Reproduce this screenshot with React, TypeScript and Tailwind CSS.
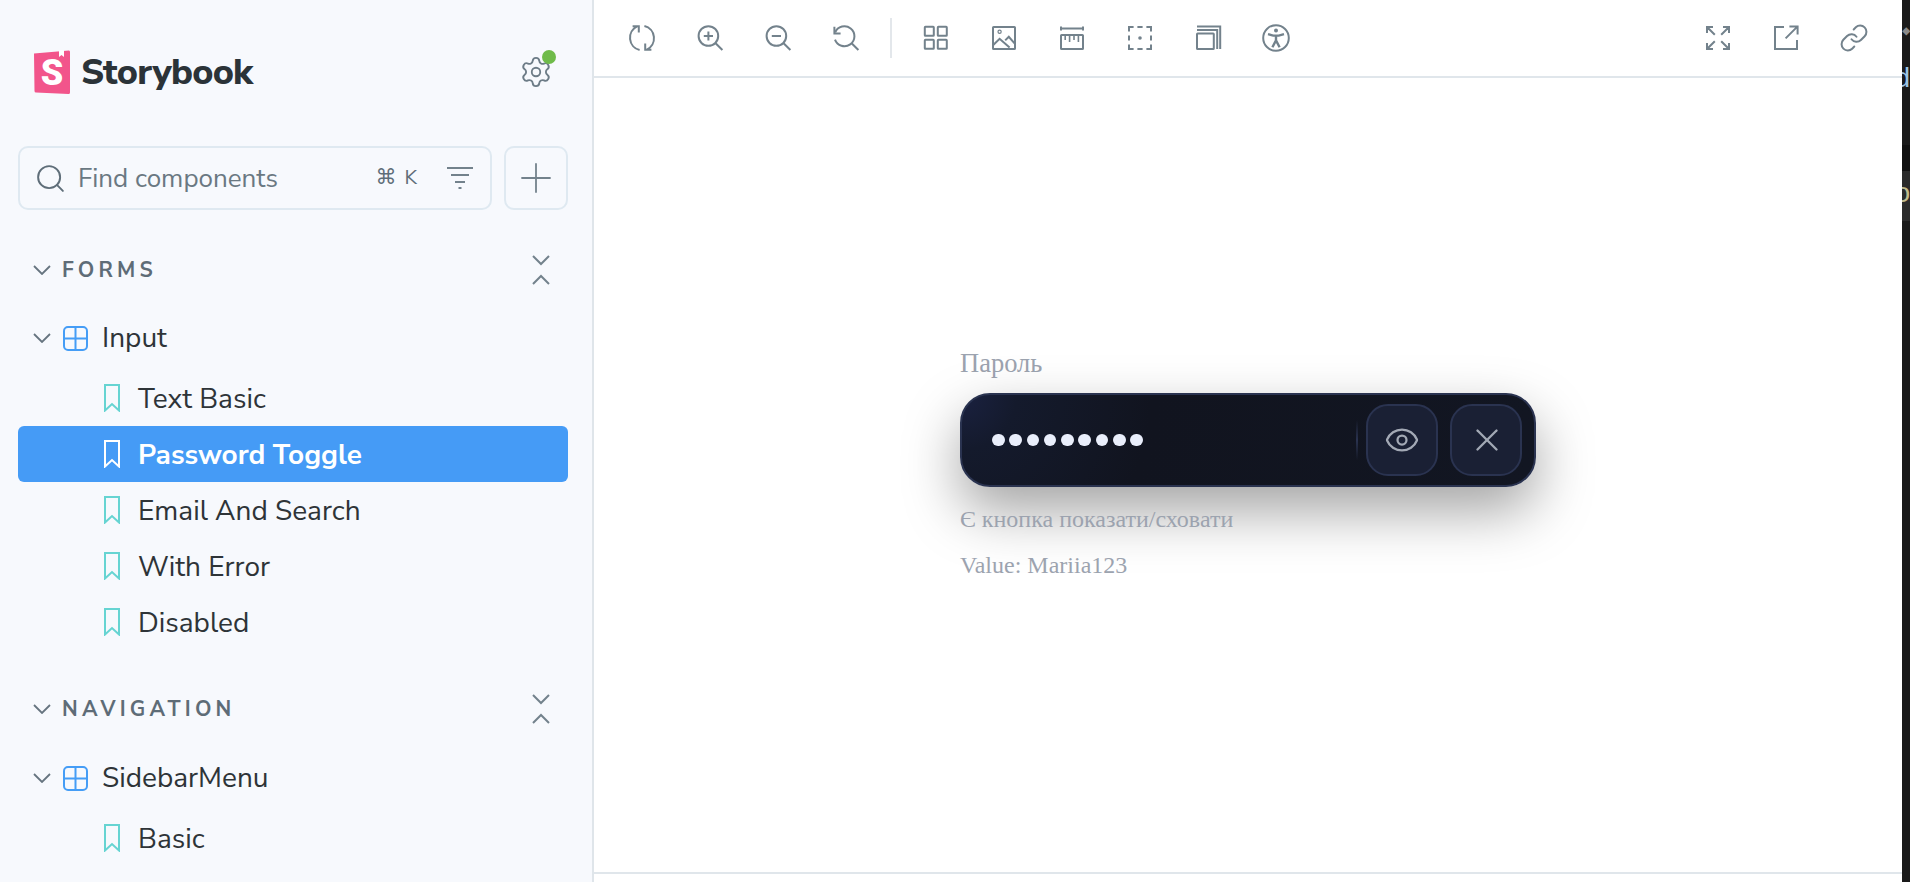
import React from "react";
import { Eye, Link, Plus, Search, Settings, X } from "lucide-react";

const ui = "font-['Nunito_Sans','Open_Sans','Noto_Sans',sans-serif]";

function Tb({ children }: { children: React.ReactNode }) {
  return (
    <span className="flex h-7 w-7 items-center justify-center">
      <svg viewBox="0 0 14 14" className="h-7 w-7" fill="none" stroke="#73828c" strokeWidth="1">
        {children}
      </svg>
    </span>
  );
}

function Chevron() {
  return (
    <svg viewBox="0 0 18 10" className="h-[10px] w-[18px] shrink-0" fill="none" stroke="#66747f" strokeWidth="1.8">
      <path d="M1 1L9 9L17 1" />
    </svg>
  );
}

function Bookmark({ white }: { white?: boolean }) {
  return (
    <svg viewBox="0 0 16 28" className="h-7 w-4 shrink-0" fill="none" stroke={white ? "#ffffff" : "#66d4d2"} strokeWidth="2">
      <path d="M1 1H15V26.5L8 20L1 26.5Z" />
    </svg>
  );
}

function Comp() {
  return (
    <svg viewBox="0 0 25 25" className="h-[25px] w-[25px] shrink-0" fill="none" stroke="#459df6" strokeWidth="2">
      <rect x="1" y="1" width="23" height="23" rx="4" />
      <path d="M12.5 1V24M1 12.5H24" />
    </svg>
  );
}

function Section({ title }: { title: string }) {
  return (
    <div className="flex h-10 items-center pl-[15px] pr-[16px]">
      <Chevron />
      <span className="ml-[11px] pt-[1px] text-[21px] font-bold tracking-[0.2em] text-[#5e6c77]">{title}</span>
      <svg viewBox="0 0 20 32" className="ml-auto mr-[1px] h-8 w-5" fill="none" stroke="#73828c" strokeWidth="2">
        <path d="M2 2L10 10L18 2M2 30L10 22L18 30" />
      </svg>
    </div>
  );
}

function Group({ name }: { name: string }) {
  return (
    <div className="flex h-14 items-center pl-[15px] text-[#2e3438]">
      <Chevron />
      <span className="ml-[12px]"><Comp /></span>
      <span className="ml-[14px] text-[28px]">{name}</span>
    </div>
  );
}

function Item({ name, active }: { name: string; active?: boolean }) {
  return (
    <div className={active
      ? "flex h-14 items-center rounded-[6px] bg-[#459bf6] pl-[86px] text-white"
      : "flex h-14 items-center pl-[86px] text-[#2e3438]"}>
      <Bookmark white={active} />
      <span className={active ? "ml-[18px] pt-[2px] text-[28px] font-bold" : "ml-[18px] pt-[2px] text-[28px]"}>{name}</span>
    </div>
  );
}

export default function App() {
  return (
    <div className="flex h-[882px] w-[1910px] overflow-hidden bg-white">
      <aside className={`flex h-full w-[594px] shrink-0 flex-col overflow-hidden border-r-2 border-[#dfe5ea] bg-[#f7f9fd] pl-[18px] pr-[24px] pt-[50px] ${ui}`}>
        <div className="flex h-[44px] items-center pl-[16px]">
          <div className="relative h-[44px] w-[36px] shrink-0">
            <svg viewBox="0 0 36 44" className="h-[44px] w-[36px]">
              <path d="M0 3.5L35 0.5Q36 0.5 36 2V42.5Q36 44 34.5 44L2 42.5Q0.5 42.5 0.5 41Z" fill="#f2558b" />
              <path d="M25 0.5V7L27.5 5L30 7V0.5Z" fill="#ffffff" />
              <text x="18" y="35" textAnchor="middle" fontSize="36" fontWeight="900" fill="#ffffff" fontFamily="'Roboto','Liberation Sans',sans-serif">S</text>
            </svg>
          </div>
          <span className="ml-[11px] pt-[2px] text-[36px] font-extrabold leading-none tracking-[-0.02em] text-[#2b3338]">Storybook</span>
          <span className="relative ml-auto mr-[18px] flex h-7 w-7 items-center justify-center">
            <Settings className="h-[34px] w-[34px] shrink-0 text-[#6d7c87]" strokeWidth={1.3} />
            <span className="absolute -right-[6px] -top-[8px] h-[14px] w-[14px] rounded-full bg-[#6fbb4a]" />
          </span>
        </div>

        <div className="mt-[52px] flex h-[64px] gap-[12px]">
          <div className="flex min-w-0 flex-1 items-center rounded-[10px] border-2 border-[#dfe9f1] pl-[14px] pr-[17px]">
            <Search className="h-[33px] w-[33px] shrink-0 text-[#5f6e79]" strokeWidth={1.4} />
            <span className="ml-[11px] text-[26px] text-[#6a7882]">Find components</span>
            <span className="ml-auto flex items-center gap-[8px] text-[#5f6e79]">
              <span className="font-['DejaVu_Sans',sans-serif] text-[21px]">⌘</span>
              <span className="text-[20px]">K</span>
            </span>
            <svg viewBox="0 0 26 22" className="ml-[30px] h-[22px] w-[26px]" fill="none" stroke="#73828c" strokeWidth="2">
              <path d="M0 1H26M4 8H22M8 15H18M11.5 21H14.5" />
            </svg>
          </div>
          <div className="flex w-[64px] shrink-0 items-center justify-center rounded-[10px] border-2 border-[#dfe9f1]">
            <Plus className="h-[48px] w-[48px] text-[#73828c]" strokeWidth={0.9} />
          </div>
        </div>

        <div className="mt-[40px]"><Section title="FORMS" /></div>
        <div className="mt-[20px]"><Group name="Input" /></div>
        <div className="mt-[4px] flex flex-col">
          <Item name="Text Basic" />
          <Item name="Password Toggle" active />
          <Item name="Email And Search" />
          <Item name="With Error" />
          <Item name="Disabled" />
        </div>
        <div className="mt-[39px]"><Section title="NAVIGATION" /></div>
        <div className="mt-[21px]"><Group name="SidebarMenu" /></div>
        <div className="mt-[4px] flex flex-col">
          <Item name="Basic" />
        </div>
      </aside>

      <main className="flex h-full min-w-0 flex-1 flex-col">
        <header className="flex h-[78px] shrink-0 items-center border-b-2 border-[#e0e6eb] pl-[34px] pr-[34px]">
          <div className="flex items-center gap-[40px]">
            <Tb>
              <path d="M5.8 13A6.3 6.3 0 0 1 4.6 1.2M2.3 1.1H5.4V4.3" />
              <path d="M8.2 1A6.3 6.3 0 0 1 9.4 12.8M11.7 12.9H8.6V9.7" />
            </Tb>
            <Tb>
              <circle cx="6.2" cy="6" r="4.9" />
              <path d="M9.8 9.6L13.2 13M3.9 6H8.5M6.2 3.7V8.3" />
            </Tb>
            <Tb>
              <circle cx="6.2" cy="6" r="4.9" />
              <path d="M9.8 9.6L13.2 13M3.9 6H8.5" />
            </Tb>
            <Tb>
              <path d="M1.6 4.2A5 5 0 1 1 1.5 7.8" />
              <path d="M1.2 1.4V4.7H4.3M9.8 9.6L13.2 13" />
            </Tb>
          </div>
          <span className="ml-[30px] h-[40px] w-[2px] bg-[#e3e7eb]" />
          <div className="ml-[30px] flex items-center gap-[40px]">
            <Tb>
              <rect x="1.4" y="1.4" width="4.5" height="4.5" rx="0.3" />
              <rect x="7.9" y="1.4" width="4.5" height="4.5" rx="0.3" />
              <rect x="1.4" y="7.9" width="4.5" height="4.5" rx="0.3" />
              <rect x="7.9" y="7.9" width="4.5" height="4.5" rx="0.3" />
            </Tb>
            <Tb>
              <rect x="1.5" y="1.5" width="11" height="11" rx="0.3" />
              <path d="M1.5 10.6L4.8 7.4L9.8 11.8M7.6 8.2L9.4 6.4L12.5 9.9" />
              <circle cx="4.8" cy="3.9" r="0.8" strokeWidth="0.6" />
            </Tb>
            <Tb>
              <path d="M1.5 1.2V3.2M12.5 1.2V3.2M1.5 2.2H12.5" />
              <rect x="1.5" y="5.5" width="11" height="7" rx="0.3" />
              <path d="M3.6 5.5V8M5.8 5.5V9M8 5.5V8M10.2 5.5V9" strokeWidth="0.8" />
            </Tb>
            <Tb>
              <path d="M1.5 3.8V1.5H3.8M5.7 1.5H8.3M10.2 1.5H12.5V3.8M12.5 5.7V8.3M12.5 10.2V12.5H10.2M8.3 12.5H5.7M3.8 12.5H1.5V10.2M1.5 8.3V5.7" />
              <circle cx="7" cy="7" r="0.9" fill="#73828c" stroke="none" />
            </Tb>
            <Tb>
              <rect x="1.5" y="4.8" width="8.4" height="7.7" rx="0.3" />
              <path d="M1.5 3H11.6V12.5M1.5 1.2H13.1V12.5" />
            </Tb>
            <Tb>
              <circle cx="7" cy="7" r="6.4" />
              <circle cx="7" cy="3.3" r="1" fill="#73828c" stroke="none" />
              <path d="M3 5.1L5.6 5.8H8.4L11 5.1M7 5.8V8.2M7 8.2L5.2 11.6M7 8.2L8.8 11.6" strokeWidth="1.2" />
            </Tb>
          </div>
          <div className="ml-auto flex items-center gap-[40px]">
            <Tb>
              <path d="M1.5 4.5V1.5H4.5M1.5 1.5L5.4 5.4M12.5 4.5V1.5H9.5M12.5 1.5L8.6 5.4M1.5 9.5V12.5H4.5M1.5 12.5L5.4 8.6M12.5 9.5V12.5H9.5M12.5 12.5L8.6 8.6" />
            </Tb>
            <Tb>
              <path d="M6 1.5H1.5V12.5H12.5V8" />
              <path d="M8.7 1.2H12.8V5.3M12.8 1.2L6.8 7.2" />
            </Tb>
            <span className="flex h-7 w-7 items-center justify-center">
              <Link className="h-[30px] w-[30px] shrink-0 text-[#73828c]" strokeWidth={1.6} />
            </span>
          </div>
        </header>

        <section className="flex min-h-0 flex-1 items-center justify-center pb-[22px] font-['Liberation_Serif',serif]">
          <div className="flex w-[576px] flex-col text-[24px] leading-[28px] text-[#9ca3af]">
            <label className="text-[26.5px]">Пароль</label>
            <div className="mt-[16px] flex h-[94px] items-center rounded-[30px] border-2 border-[#2a3350] bg-[radial-gradient(circle_at_0%_0%,#1a2140_0px,#141a2c_55px,#11141f_190px,#121622_576px)] pl-[30px] pr-[12px] shadow-[0_24px_56px_rgba(0,0,0,0.36)]">
              <span className="flex items-center gap-[4.8px]">
                {Array.from({ length: 9 }).map((_, i) => (
                  <span key={i} className="h-[12.5px] w-[12.5px] rounded-full bg-[#e9eefb]" />
                ))}
              </span>
              <span className="ml-auto h-[40px] w-[2px] bg-gradient-to-b from-transparent via-[#2a3350] to-transparent" />
              <span className="ml-[8px] flex h-[72px] w-[72px] items-center justify-center rounded-[22px] border-2 border-[#2a3350] bg-[#1a2034]">
                <Eye className="h-9 w-9 text-[#a3a9b5]" strokeWidth={1.5} />
              </span>
              <span className="ml-[12px] flex h-[72px] w-[72px] items-center justify-center rounded-[22px] border-2 border-[#2a3350] bg-[#1a2034] pl-[1px]">
                <X className="h-[38px] w-[38px] text-[#a3a9b5]" strokeWidth={1.5} />
              </span>
            </div>
            <p className="mt-[18px]">Є кнопка показати/сховати</p>
            <p className="mt-[18px]">Value: Mariia123</p>
          </div>
        </section>

        <div className="mb-[8px] h-[2px] shrink-0 bg-[#e0e6eb]" />
      </main>

      <div className="flex h-full w-[8px] shrink-0 flex-col overflow-hidden bg-[#1a1a1a] font-['Liberation_Mono',monospace] text-[28px] leading-none">
        <span className="mt-[24px] h-[16px] text-[14px] text-[#8a8a8a]">◆</span>
        <span className="mt-[26px] h-[26px] -ml-[8px] text-[#9cc4e4]">d</span>
        <span className="mt-[53px] h-[26px] shrink-0 bg-[#111111]" />
        <span className="h-[50px] shrink-0 bg-[#2b2b2b] pt-[10px] -ml-[8px] text-[#c2bd8e]">o</span>
      </div>
    </div>
  );
}
